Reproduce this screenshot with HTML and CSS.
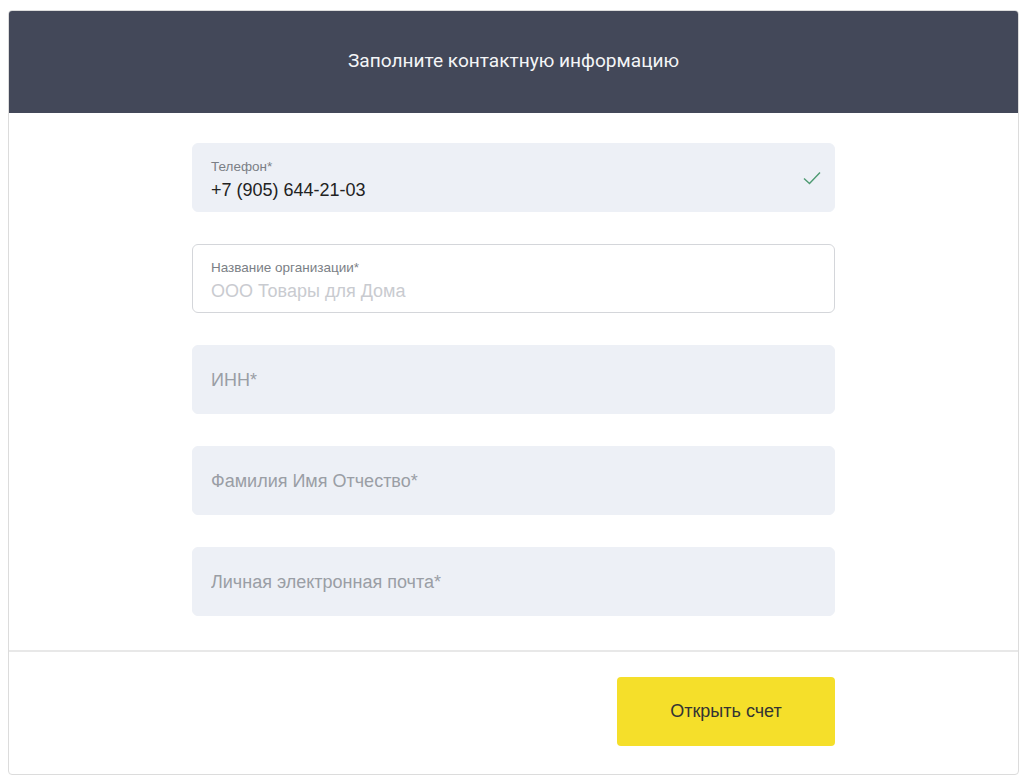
FILE: index.html
```html
<!DOCTYPE html>
<html lang="ru">
<head>
    <meta charset="UTF-8">
    <meta name="viewport" content="width=device-width, initial-scale=1.0">
    <title>Контактная информация</title>
    <link rel="stylesheet" href="styles.css">
</head>
<body>
    <div class="card">
        <div class="card-header">
            <h2>Заполните контактную информацию</h2>
        </div>
        <form class="form" id="contactForm">
            <div class="field field-filled">
                <label for="phone">Телефон*</label>
                <input type="tel" id="phone" name="phone" value="+7 (905) 644-21-03">
                <svg class="check" width="18" height="14" viewBox="0 0 18 14">
                    <path d="M1 7.5 L6.5 12.5 L17 1.5" fill="none" stroke="#4e9a72" stroke-width="1.4"/>
                </svg>
            </div>
            <div class="field field-active">
                <label for="company">Название организации*</label>
                <input type="text" id="company" name="company" placeholder="ООО Товары для Дома">
            </div>
            <div class="field">
                <input type="text" id="inn" name="inn" placeholder="ИНН*">
            </div>
            <div class="field">
                <input type="text" id="fio" name="fio" placeholder="Фамилия Имя Отчество*">
            </div>
            <div class="field">
                <input type="email" id="email" name="email" placeholder="Личная электронная почта*">
            </div>
        </form>
        <div class="card-footer">
            <div class="footer-inner">
                <button type="button" class="button">Открыть счет</button>
            </div>
        </div>
    </div>
</body>
</html>
```
FILE: styles.css
```css
body {
    font-family: "Liberation Sans", Arial, sans-serif;
    background-color: #fff;
    margin: 0;
    padding: 10px 5px 6px 8px;
}
.card {
    border: 1px solid #dcdcdc;
    border-radius: 4px;
    background-color: #fff;
    overflow: hidden;
}
.card-header {
    background-color: #434859;
    height: 103px;
    margin: -1px -1px 0;
    display: flex;
    align-items: center;
    justify-content: center;
    border-radius: 4px 4px 0 0;
}
.card-header h2 {
    margin: 0 0 2px;
    color: #f4f5f7;
    font-family: Roboto, sans-serif;
    font-weight: 400;
    font-size: 19.1px;
}
.form {
    width: 643px;
    margin: 0 auto;
    padding: 30px 0 34px;
    display: flex;
    flex-direction: column;
    gap: 32px;
}
.field {
    position: relative;
    height: 69px;
    box-sizing: border-box;
    background-color: #edf0f6;
    border: 1px solid #edf0f6;
    border-radius: 6px;
    padding: 1px 18px 0;
    display: flex;
    flex-direction: column;
    justify-content: center;
}
.field label {
    display: block;
    font-size: 13.5px;
    color: #7b7f86;
    margin-bottom: 6.5px;
}
.field input {
    border: none;
    background: transparent;
    outline: none;
    padding: 0;
    font-family: "Liberation Sans", Arial, sans-serif;
    font-size: 18px;
    color: #333;
    width: 100%;
}
.field input::placeholder {
    color: #9a9ea5;
}
.field-filled input {
    color: #222;
}
.field-active {
    background-color: #fff;
    border-color: #d4d6da;
}
.field-active input::placeholder {
    color: #c9cbd0;
}
.field-filled label,
.field-active label {
    margin-top: 3.5px;
}
.check {
    position: absolute;
    right: 13px;
    top: 27px;
}
.card-footer {
    border-top: 2px solid #e8e8e8;
    padding: 25px 0 28px;
}
.footer-inner {
    width: 643px;
    margin: 0 auto;
    display: flex;
    justify-content: flex-end;
}
.button {
    width: 218px;
    height: 69px;
    background-color: #f5df2a;
    border: none;
    border-radius: 4px;
    font-family: "Liberation Sans", Arial, sans-serif;
    font-size: 18px;
    color: #333;
    cursor: pointer;
}
.button:hover {
    background-color: #f0d816;
}
```
